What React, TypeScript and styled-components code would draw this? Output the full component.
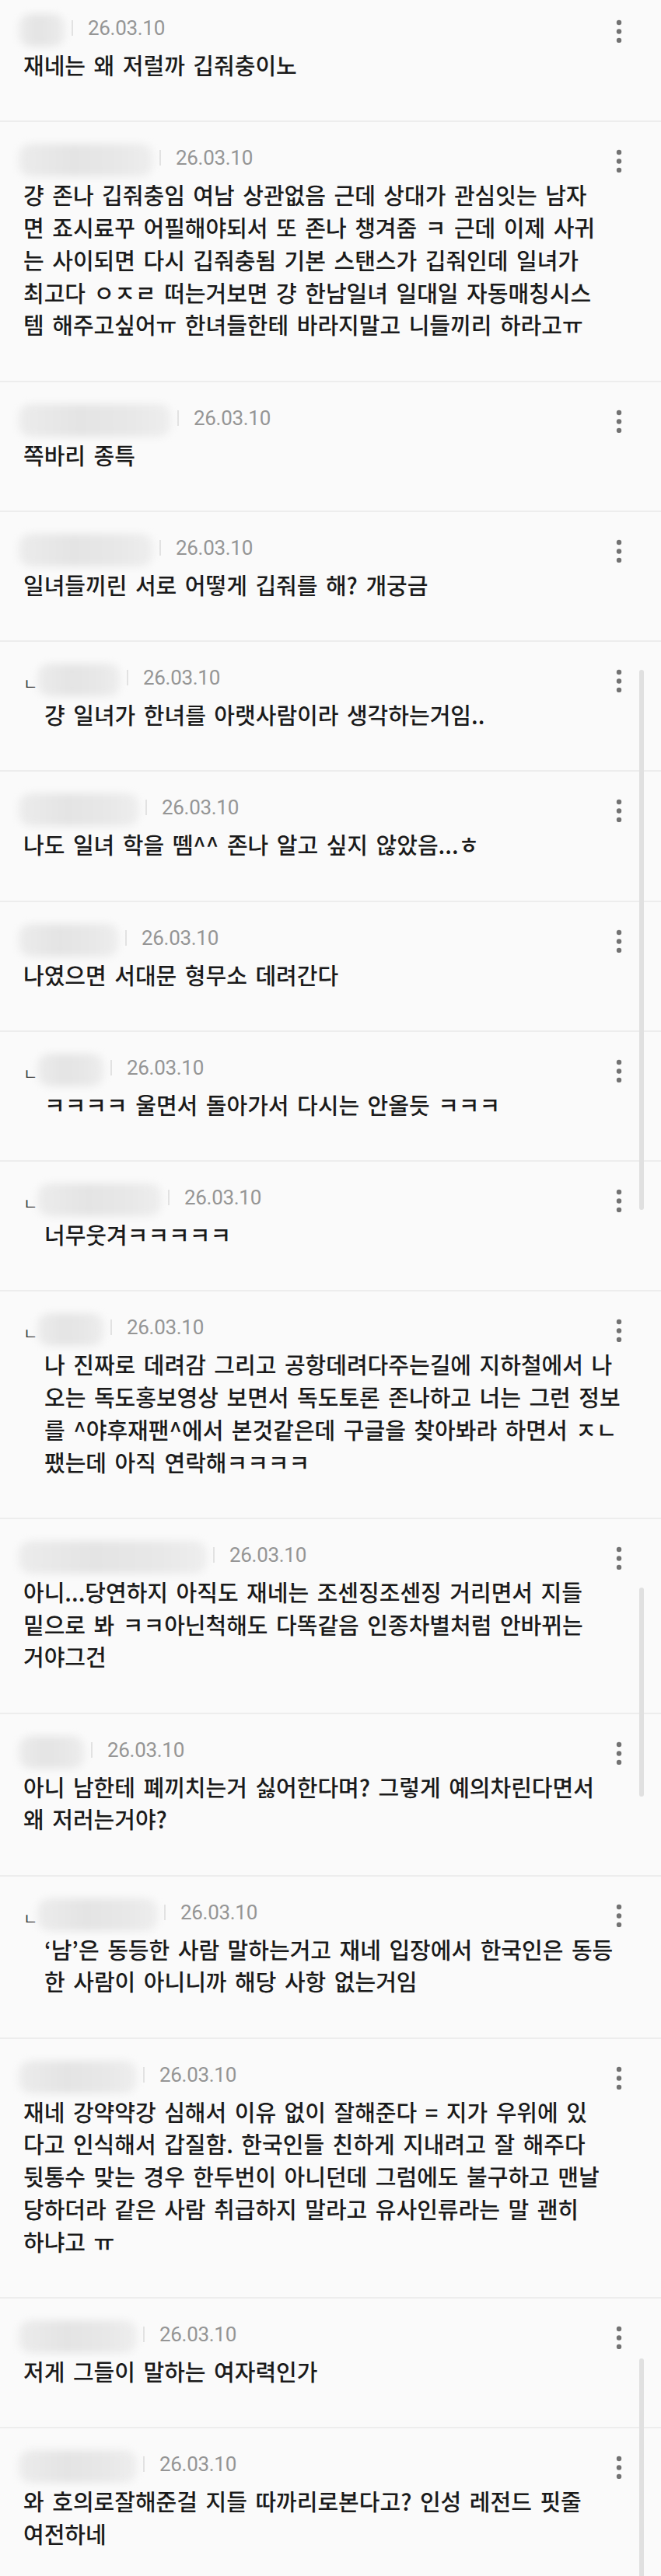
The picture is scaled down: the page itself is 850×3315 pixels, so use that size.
import styled, { createGlobalStyle } from "styled-components";

const GlobalStyle = createGlobalStyle`
  html, body {
    margin: 0;
    padding: 0;
    background: #fafafa;
    overflow-x: hidden;
  }
`;

type Comment = {
  reply?: boolean;
  nameWidth: number;
  lines: string[];
};

const comments: Comment[] = [
  { nameWidth: 60, lines: ["재네는 왜 저럴까 깁줘충이노"] },
  {
    nameWidth: 173,
    lines: [
      "걍 존나 깁줘충임 여남 상관없음 근데 상대가 관심잇는 남자",
      "면 죠시료꾸 어필해야되서 또 존나 챙겨줌 ㅋ 근데 이제 사귀",
      "는 사이되면 다시 깁줘충됨 기본 스탠스가 깁줘인데 일녀가",
      "최고다 ㅇㅈㄹ 떠는거보면 걍 한남일녀 일대일 자동매칭시스",
      "템 해주고싶어ㅠ 한녀들한테 바라지말고 니들끼리 하라고ㅠ",
    ],
  },
  { nameWidth: 196, lines: ["쪽바리 종특"] },
  { nameWidth: 173, lines: ["일녀들끼린 서로 어떻게 깁줘를 해? 개궁금"] },
  { reply: true, nameWidth: 107, lines: ["걍 일녀가 한녀를 아랫사람이라 생각하는거임.."] },
  { nameWidth: 155, lines: ["나도 일녀 학을 뗌^^ 존나 알고 싶지 않았음...ㅎ"] },
  { nameWidth: 129, lines: ["나였으면 서대문 형무소 데려간다"] },
  { reply: true, nameWidth: 86, lines: ["ㅋㅋㅋㅋ 울면서 돌아가서 다시는 안올듯 ㅋㅋㅋ"] },
  { reply: true, nameWidth: 160, lines: ["너무웃겨ㅋㅋㅋㅋㅋ"] },
  {
    reply: true,
    nameWidth: 86,
    lines: [
      "나 진짜로 데려감 그리고 공항데려다주는길에 지하철에서 나",
      "오는 독도홍보영상 보면서 독도토론 존나하고 너는 그런 정보",
      "를 ^야후재팬^에서 본것같은데 구글을 찾아봐라 하면서 ㅈㄴ",
      "팼는데 아직 연락해ㅋㅋㅋㅋ",
    ],
  },
  {
    nameWidth: 242,
    lines: [
      "아니...당연하지 아직도 재네는 조센징조센징 거리면서 지들",
      "밑으로 봐 ㅋㅋ아닌척해도 다똑같음 인종차별처럼 안바뀌는",
      "거야그건",
    ],
  },
  {
    nameWidth: 85,
    lines: [
      "아니 남한테 폐끼치는거 싫어한다며? 그렇게 예의차린다면서",
      "왜 저러는거야?",
    ],
  },
  {
    reply: true,
    nameWidth: 155,
    lines: [
      "‘남’은 동등한 사람 말하는거고 재네 입장에서 한국인은 동등",
      "한 사람이 아니니까 해당 사항 없는거임",
    ],
  },
  {
    nameWidth: 152,
    lines: [
      "재네 강약약강 심해서 이유 없이 잘해준다 = 지가 우위에 있",
      "다고 인식해서 갑질함. 한국인들 친하게 지내려고 잘 해주다",
      "뒷통수 맞는 경우 한두번이 아니던데 그럼에도 불구하고 맨날",
      "당하더라 같은 사람 취급하지 말라고 유사인류라는 말 괜히",
      "하냐고 ㅠ",
    ],
  },
  { nameWidth: 152, lines: ["저게 그들이 말하는 여자력인가"] },
  {
    nameWidth: 152,
    lines: [
      "와 호의로잘해준걸 지들 따까리로본다고? 인성 레전드 핏줄",
      "여전하네",
    ],
  },
];

// scroll indicator pieces left over from the stitched captures
const scrollMarks = [
  { top: 862, height: 695 },
  { top: 2043, height: 269 },
  { top: 3035, height: 320 },
];

const Page = styled.div`
  position: relative;
  width: 850px;
  background: #fafafa;
  font-family: "Noto Sans CJK KR", "Noto Sans", sans-serif;
`;

const Item = styled.section<{ $first?: boolean }>`
  border-top: ${(p) => (p.$first ? "none" : "2px solid #ededed")};
  padding: ${(p) => (p.$first ? "16px" : "26px")} 0 50.5px;
  display: flex;
  flex-direction: column;
  gap: 7px;
`;

const Header = styled.div`
  display: flex;
  align-items: center;
  height: 40px;
  padding: 0 44px 0 30px;
`;

const ReplyMark = styled.span`
  width: 15px;
  margin-right: 3px;
  align-self: flex-end;
  margin-bottom: 1px;
  font-size: 20px;
  line-height: 22px;
  color: #3a3a3a;
`;

const NameBlur = styled.div<{ $reply?: boolean }>`
  height: 42px;
  margin-left: ${(p) => (p.$reply ? "0" : "-6px")};
  margin-top: 6px;
  border-radius: 16px;
  background: linear-gradient(90deg, #ececec 0%, #e4e4e4 40%, #e8e8e8 75%, #eeeeee 100%);
  filter: blur(5px);
  flex-shrink: 0;
`;

const Divider = styled.span`
  width: 2px;
  height: 20px;
  margin: 0 19px 0 8px;
  background: #e2e2e2;
`;

const DateText = styled.span`
  font-family: Roboto, "Liberation Sans", sans-serif;
  font-size: 26px;
  color: #959595;
  letter-spacing: -0.3px;
`;

const More = styled.button`
  margin-left: auto;
  margin-top: 8px;
  width: 20px;
  height: 32px;
  padding: 0;
  border: none;
  background: none;
  display: flex;
  align-items: center;
  justify-content: center;
`;

const Body = styled.div<{ $reply?: boolean }>`
  padding-left: ${(p) => (p.$reply ? "57px" : "30px")};
`;

const Line = styled.p`
  margin: 0;
  font-size: 29px;
  font-weight: 500;
  line-height: 41.75px;
  color: #1a1a1a;
  word-spacing: 4px;
  white-space: nowrap;
`;

const ScrollMark = styled.div`
  position: absolute;
  left: 822px;
  width: 6px;
  border-radius: 3px;
  background: #e0e0e0;
`;

const DotsIcon = () => (
  <svg width="10" height="30" viewBox="0 0 10 30">
    <circle cx="5" cy="4" r="3.2" fill="#727272" />
    <circle cx="5" cy="15.5" r="3.2" fill="#727272" />
    <circle cx="5" cy="27" r="3.2" fill="#727272" />
  </svg>
);

export default function App() {
  return (
    <Page>
      <GlobalStyle />
      {comments.map((c, i) => (
        <Item key={i} $first={i === 0}>
          <Header>
            {c.reply && <ReplyMark>ㄴ</ReplyMark>}
            <NameBlur $reply={c.reply} style={{ width: c.nameWidth }} />
            <Divider />
            <DateText>26.03.10</DateText>
            <More aria-label="더보기">
              <DotsIcon />
            </More>
          </Header>
          <Body $reply={c.reply}>
            {c.lines.map((l, j) => (
              <Line key={j}>{l}</Line>
            ))}
          </Body>
        </Item>
      ))}
      {scrollMarks.map((m, i) => (
        <ScrollMark key={i} style={{ top: m.top, height: m.height }} />
      ))}
    </Page>
  );
}
